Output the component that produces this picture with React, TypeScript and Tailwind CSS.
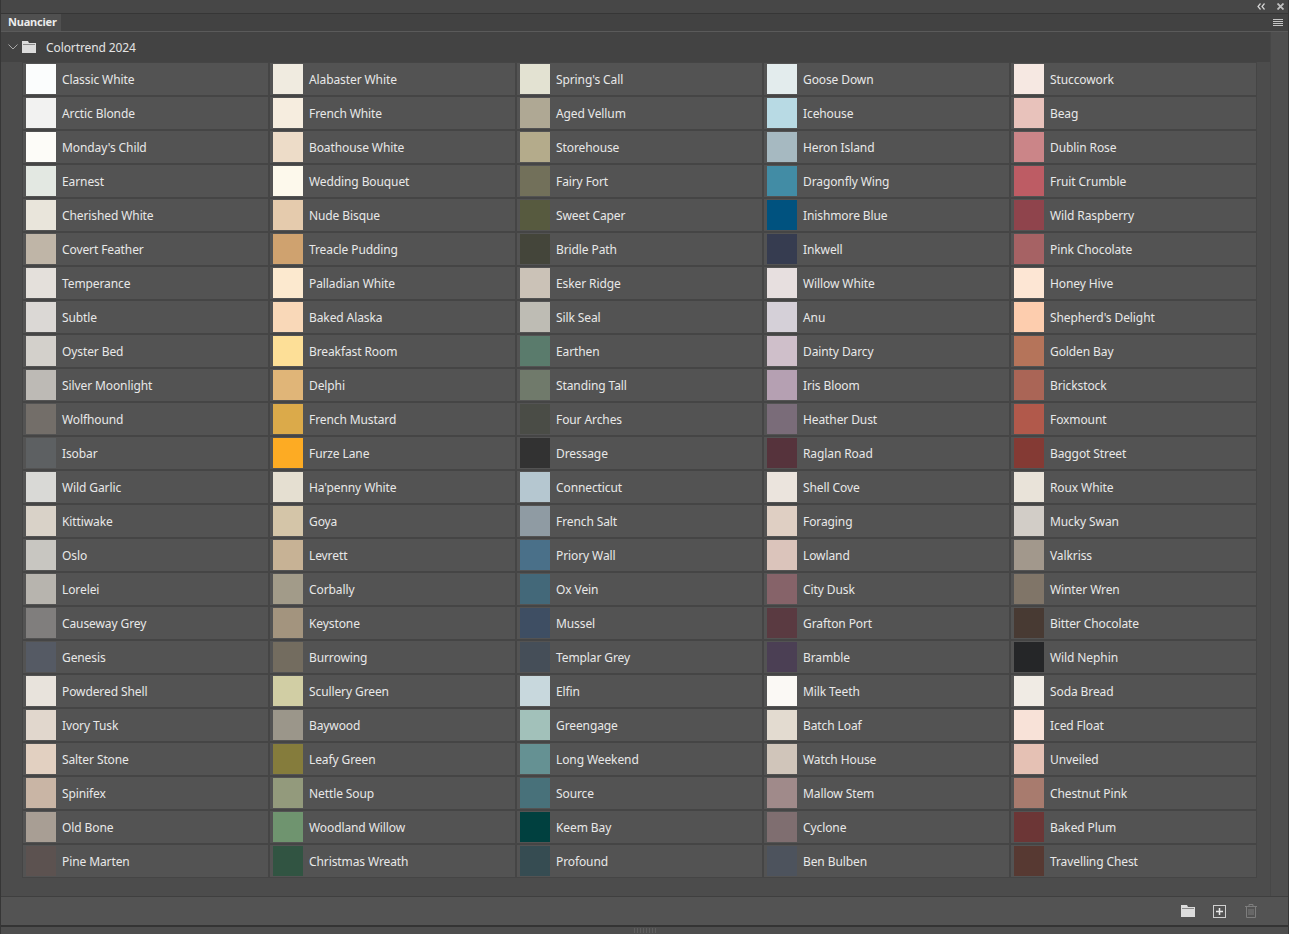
const COLUMNS: [string, string][][] = [
  [
    ['Classic White', '#fbfdfd'], ['Arctic Blonde', '#f2f2f1'], ["Monday's Child", '#fdfcf8'], ['Earnest', '#e3e8e2'],
    ['Cherished White', '#e9e5db'], ['Covert Feather', '#bfb5a7'], ['Temperance', '#e4e0db'], ['Subtle', '#dbd8d5'],
    ['Oyster Bed', '#d3d0cb'], ['Silver Moonlight', '#bdbab5'], ['Wolfhound', '#736e69'], ['Isobar', '#5d6062'],
    ['Wild Garlic', '#d9d9d6'], ['Kittiwake', '#d9d2c8'], ['Oslo', '#c8c6c1'], ['Lorelei', '#b7b4ae'],
    ['Causeway Grey', '#807e7d'], ['Genesis', '#555a64'], ['Powdered Shell', '#e8e3dc'], ['Ivory Tusk', '#e1d7cd'],
    ['Salter Stone', '#e2d0c1'], ['Spinifex', '#c9b5a5'], ['Old Bone', '#a89e94'], ['Pine Marten', '#5c5250'],
  ],
  [
    ['Alabaster White', '#f0ebe0'], ['French White', '#f6eddf'], ['Boathouse White', '#eddcc8'], ['Wedding Bouquet', '#fdf9ec'],
    ['Nude Bisque', '#e5cbad'], ['Treacle Pudding', '#cfa26f'], ['Palladian White', '#fce9cf'], ['Baked Alaska', '#f9d8b8'],
    ['Breakfast Room', '#fddf97'], ['Delphi', '#e0b578'], ['French Mustard', '#dbaa4a'], ['Furze Lane', '#fdab23'],
    ["Ha'penny White", '#e5dfd1'], ['Goya', '#d4c5a8'], ['Levrett', '#c7b295'], ['Corbally', '#a29b89'],
    ['Keystone', '#a3947e'], ['Burrowing', '#736c5f'], ['Scullery Green', '#d1cea4'], ['Baywood', '#9b968a'],
    ['Leafy Green', '#857c3c'], ['Nettle Soup', '#939a7c'], ['Woodland Willow', '#6f946f'], ['Christmas Wreath', '#315442'],
  ],
  [
    ["Spring's Call", '#e3e2d2'], ['Aged Vellum', '#afa894'], ['Storehouse', '#b4ab8b'], ['Fairy Fort', '#72705a'],
    ['Sweet Caper', '#575a3f'], ['Bridle Path', '#44453a'], ['Esker Ridge', '#cbc2b7'], ['Silk Seal', '#bebcb4'],
    ['Earthen', '#5a7b6c'], ['Standing Tall', '#707a6b'], ['Four Arches', '#4a4c46'], ['Dressage', '#323232'],
    ['Connecticut', '#b5c7d0'], ['French Salt', '#8f9ba3'], ['Priory Wall', '#4a7089'], ['Ox Vein', '#436879'],
    ['Mussel', '#3e4e63'], ['Templar Grey', '#454e58'], ['Elfin', '#c8d8dd'], ['Greengage', '#a2c1ba'],
    ['Long Weekend', '#659193'], ['Source', '#48717a'], ['Keem Bay', '#00403f'], ['Profound', '#364c52'],
  ],
  [
    ['Goose Down', '#e3eced'], ['Icehouse', '#b8dae4'], ['Heron Island', '#a6b9c1'], ['Dragonfly Wing', '#428ca5'],
    ['Inishmore Blue', '#00527f'], ['Inkwell', '#363c50'], ['Willow White', '#e7dfdf'], ['Anu', '#d5d0d8'],
    ['Dainty Darcy', '#cfbfca'], ['Iris Bloom', '#b5a0b2'], ['Heather Dust', '#7a6c79'], ['Raglan Road', '#56333c'],
    ['Shell Cove', '#ebe4dd'], ['Foraging', '#dfcfc3'], ['Lowland', '#dbc4bb'], ['City Dusk', '#866369'],
    ['Grafton Port', '#5a3a41'], ['Bramble', '#4b3f54'], ['Milk Teeth', '#fbf9f5'], ['Batch Loaf', '#e3dbd0'],
    ['Watch House', '#d0c5ba'], ['Mallow Stem', '#a08a8a'], ['Cyclone', '#7f6e70'], ['Ben Bulben', '#4d535d'],
  ],
  [
    ['Stuccowork', '#f6e8e2'], ['Beag', '#e8c2bb'], ['Dublin Rose', '#cb8588'], ['Fruit Crumble', '#bd5c64'],
    ['Wild Raspberry', '#8f444c'], ['Pink Chocolate', '#a66264'], ['Honey Hive', '#fde6d4'], ["Shepherd's Delight", '#fdcdae'],
    ['Golden Bay', '#b5745a'], ['Brickstock', '#aa6556'], ['Foxmount', '#b1594b'], ['Baggot Street', '#843a34'],
    ['Roux White', '#e9e3d9'], ['Mucky Swan', '#d2cdc7'], ['Valkriss', '#a2988c'], ['Winter Wren', '#807568'],
    ['Bitter Chocolate', '#483a33'], ['Wild Nephin', '#252628'], ['Soda Bread', '#f0ebe4'], ['Iced Float', '#f8e2d8'],
    ['Unveiled', '#e5c1b4'], ['Chestnut Pink', '#a87b6e'], ['Baked Plum', '#6c3636'], ['Travelling Chest', '#573932'],
  ],
]

function FolderIcon({ className }: { className: string }) {
  return (
    <svg viewBox="0 0 14 12" className={className}>
      <path d="M0 0h6l1 2h7v10h-14z" fill="#dcdcdc" />
      <path d="M1 3.5h12" stroke="#8a8a8a" />
    </svg>
  )
}

function Swatch({ name, color }: { name: string; color: string }) {
  return (
    <div className="flex h-[32px] w-[245px] items-center bg-[#535353] pl-[3px]">
      <div className="h-[30px] w-[30px] shrink-0" style={{ backgroundColor: color }} />
      <span className="ml-[6px] whitespace-nowrap pt-[2px] text-[12px] tracking-[-0.1px] text-[#e8e8e8]">{name}</span>
    </div>
  )
}

export default function App() {
  return (
    <div className="flex h-[934px] w-[1289px] flex-col overflow-hidden border-x border-[#363636] bg-[#4c4c4c] font-['Noto_Sans',sans-serif]">
      <div className="flex h-[14px] shrink-0 items-center justify-end gap-[12px] border-b border-[#363636] bg-[#474747] pr-[4px] text-[#d4d4d4]">
        <svg viewBox="0 0 8 7" className="h-[7px] w-[8px]" fill="none" stroke="currentColor" strokeWidth="1.2">
          <path d="M3.5 .5 1 3.5l2.5 3M7.5 .5 5 3.5l2.5 3" />
        </svg>
        <svg viewBox="0 0 7 7" className="h-[7px] w-[7px]" fill="none" stroke="#c0c0c0" strokeWidth="1.8">
          <path d="M.5.5l6 6M6.5.5l-6 6" />
        </svg>
      </div>
      <div className="flex h-[18px] shrink-0 items-stretch justify-between border-b border-[#5a5a5a] bg-[#424242] pr-[5px]">
        <div className="flex w-[60px] items-center bg-[#505050] pl-[7px] text-[11px] font-bold tracking-[-0.2px] text-[#ececec]">Nuancier</div>
        <div className="flex w-[10px] flex-col justify-center gap-px">
          <div className="h-px bg-[#c4c4c4]" />
          <div className="h-px bg-[#c4c4c4]" />
          <div className="h-px bg-[#c4c4c4]" />
          <div className="h-px bg-[#c4c4c4]" />
        </div>
      </div>
      <div className="flex min-h-0 flex-1">
        <div className="flex w-[1270px] flex-col border-r border-[#474747]">
          <div className="flex h-[30px] shrink-0 items-center bg-[#434343] pl-[7px]">
            <svg viewBox="0 0 10 6" className="h-[6px] w-[10px]" fill="none" stroke="#a8a8a8">
              <path d="M.5.5 5 5 9.5.5" />
            </svg>
            <FolderIcon className="ml-[4px] h-[12px] w-[14px]" />
            <span className="ml-[10px] pt-[2px] text-[12px] tracking-[-0.1px] text-[#e4e4e4]">Colortrend 2024</span>
          </div>
          <div className="ml-[21px] flex w-fit gap-[2px] bg-[#454545] p-px">
            {COLUMNS.map((column, i) => (
              <div key={i} className="flex flex-col gap-[2px]">
                {column.map(([name, color]) => (
                  <Swatch key={name} name={name} color={color} />
                ))}
              </div>
            ))}
          </div>
        </div>
        <div className="flex-1 bg-[#4e4e4e]" />
      </div>
      <div className="flex h-[29px] shrink-0 items-center justify-end gap-[19px] border-t border-[#3f3f3f] bg-[#535353] pr-[31px]">
        <FolderIcon className="-mr-px h-[12px] w-[14px]" />
        <svg viewBox="0 0 13 13" className="h-[13px] w-[13px]" fill="none" stroke="#d0d0d0">
          <rect x=".5" y=".5" width="12" height="12" />
          <path d="M6.5 3v7M3 6.5h7" strokeWidth="1.5" stroke="#e8e8e8" />
        </svg>
        <svg viewBox="0 0 12 14" className="h-[14px] w-[12px]" fill="none" stroke="#7d7d7d">
          <path d="M0 2.5h12M4 2.5v-2h4v2M1.5 2.5v11h9v-11M4 5v6M6 5v6M8 5v6" />
        </svg>
      </div>
      <div className="flex h-[9px] shrink-0 items-center justify-center border-t-2 border-[#343434] bg-[#4e4e4e]">
        <div className="flex h-[5px] gap-[2px]">
          {[0, 1, 2, 3, 4, 5, 6, 7].map((i) => (
            <div key={i} className="w-px bg-[#5e5e5e]" />
          ))}
        </div>
      </div>
    </div>
  )
}
